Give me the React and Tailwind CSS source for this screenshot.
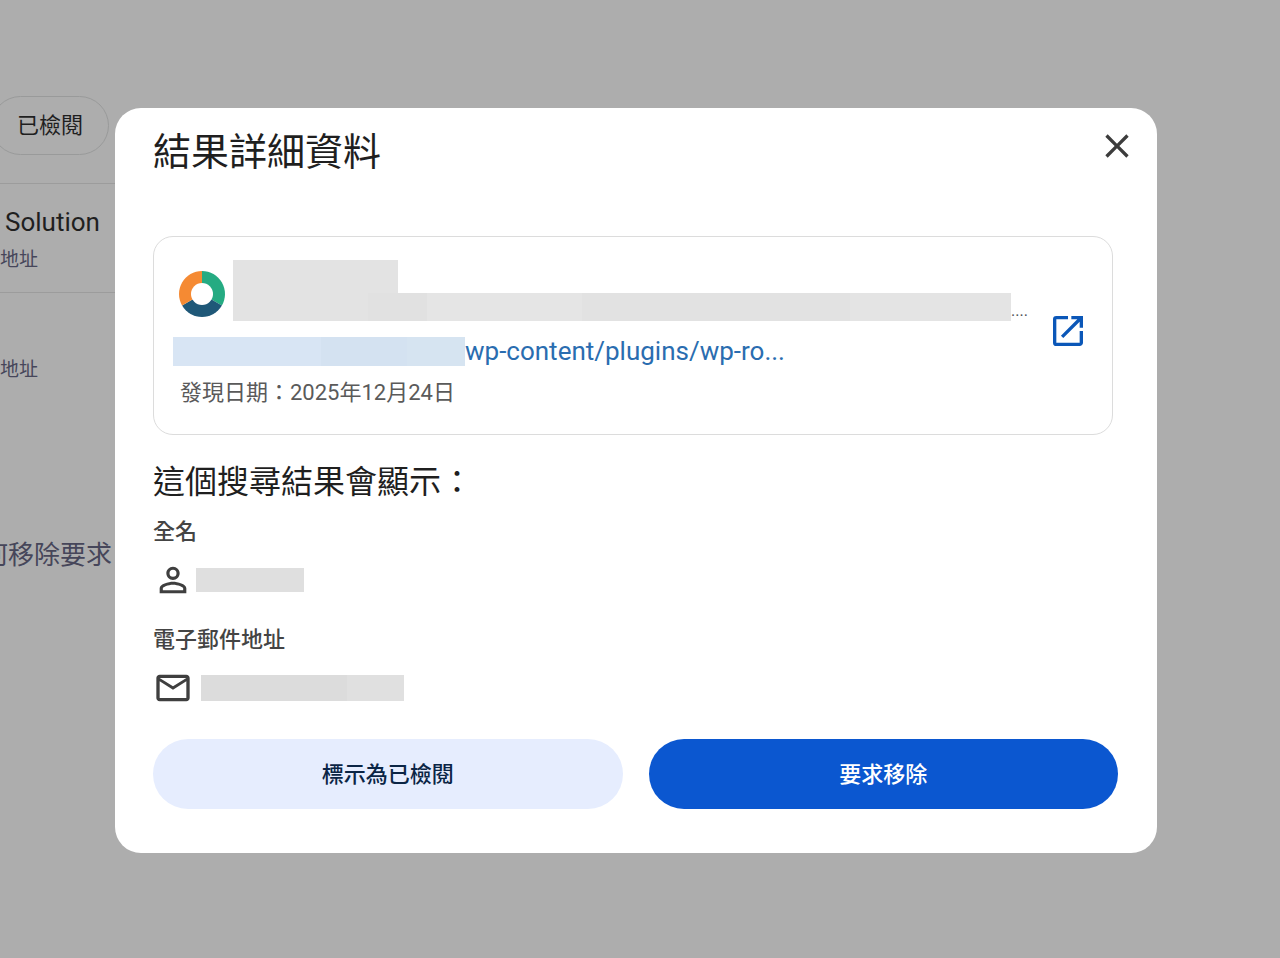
import React from 'react';
import { MdClose, MdMailOutline, MdOpenInNew, MdPersonOutline } from 'react-icons/md';

const SiteIcon = () => (
    <svg viewBox="0 0 46 46" className="mb-1 size-[46px] shrink-0" aria-hidden="true">
        <path d="M23 23 L23 0 A23 23 0 0 1 42.9 34.5 Z" fill="#25ab82" />
        <path d="M23 23 L42.9 34.5 A23 23 0 0 1 3.1 34.5 Z" fill="#1f5878" />
        <path d="M23 23 L3.1 34.5 A23 23 0 0 1 23 0 Z" fill="#f58a33" />
        <circle cx="23" cy="23" r="11" fill="#fff" />
    </svg>
);

const ResultsPage = () => (
    <main className="w-[640px] pt-24 text-[#1f1f1f]">
        <button className="-ml-[9px] h-[59px] rounded-full border border-[#999a9a] px-[25px] text-[22px]">
            已檢閱
        </button>
        <ul className="mt-7">
            <li className="h-[110px] border-y border-[#9c9c9c] pt-5">
                <p className="pl-[5px] text-[26px] leading-9">Solution</p>
                <p className="text-[19px] leading-10 text-[#46465a]">地址</p>
            </li>
            <li className="pt-[57px]">
                <p className="text-[19px] leading-10 text-[#46465a]">地址</p>
            </li>
        </ul>
        <p className="-ml-[18px] mt-[142px] text-[26px] leading-[46px] text-[#46465a]">何移除要求</p>
    </main>
);

const ResultCard = () => (
    <div className="mr-[5px] flex rounded-[20px] border border-[#dcdcdc] pl-[19px] pr-6 pt-[23px] pb-[26px]">
        <div className="min-w-0 flex-1">
            <div className="flex items-end gap-2 pl-1.5">
                <SiteIcon />
                <div className="min-w-0 flex-1">
                    <div className="h-[33px] w-[165px] bg-[#e3e3e3]" />
                    <div className="flex items-end">
                        <div className="flex h-7 w-[778px] shrink">
                            <span className="w-[135px] bg-[#e3e3e3]" />
                            <span className="w-[59px] bg-[#e1e1e1]" />
                            <span className="w-[155px] bg-[#e5e5e5]" />
                            <span className="w-[268px] bg-[#e2e2e2]" />
                            <span className="flex-1 bg-[#e4e4e4]" />
                        </div>
                        <span className="text-base leading-5 text-[#4d5156]">....</span>
                    </div>
                </div>
            </div>
            <div className="mt-4 flex h-[29px] items-center">
                <div className="flex h-full w-[292px]">
                    <span className="w-[148px] bg-[#d8e5f4]" />
                    <span className="w-[86px] bg-[#d4e2f1]" />
                    <span className="flex-1 bg-[#d6e4f1]" />
                </div>
                <a href="#result" className="text-[26px] leading-[29px] text-[#2a6db0]">
                    wp-content/plugins/wp-ro...
                </a>
            </div>
            <p className="mt-3 pl-[7px] text-[22px] leading-[30px] text-[#5a5a5a]">發現日期：2025年12月24日</p>
        </div>
        <a href="#open" aria-label="開啟" className="mt-[51px] self-start text-[#0b57b8]">
            <MdOpenInNew className="size-10" />
        </a>
    </div>
);

const DetailsDialog = () => (
    <div
        role="dialog"
        aria-labelledby="dialog-title"
        className="w-full max-w-[1042px] rounded-[26px] bg-white pt-4 pb-11 text-[#1f1f1f]"
    >
        <header className="flex items-start justify-between pl-[38px] pr-5">
            <h1 id="dialog-title" className="text-[38px] leading-[56px]">結果詳細資料</h1>
            <button aria-label="關閉" className="mt-0.5 text-[#3c3c3c]">
                <MdClose className="size-10" />
            </button>
        </header>

        <div className="mt-14 pl-[38px] pr-[39px]">
            <ResultCard />

            <h2 className="mt-[22px] text-[32px] leading-[50px]">這個搜尋結果會顯示：</h2>

            <h3 className="mt-[9px] text-[22px] font-medium leading-8 text-[#444]">全名</h3>
            <div className="mt-3 flex items-center gap-[3px]">
                <MdPersonOutline className="size-10 text-[#3f3f3f]" />
                <div className="h-6 w-[108px] bg-[#dfdfdf]" />
            </div>

            <h3 className="mt-6 text-[22px] font-medium leading-8 text-[#444]">電子郵件地址</h3>
            <div className="mt-3 flex items-center gap-2">
                <MdMailOutline className="size-10 text-[#3f3f3f]" />
                <div className="flex h-[26px] w-[203px]">
                    <span className="w-[146px] bg-[#dcdcdc]" />
                    <span className="flex-1 bg-[#e0e0e0]" />
                </div>
            </div>

            <div className="mt-[31px] grid grid-cols-2 gap-[26px] text-[22px] font-medium">
                <button className="h-[70px] rounded-full bg-[#e6edfe] text-[#0b2545]">標示為已檢閱</button>
                <button className="h-[70px] rounded-full bg-[#0b57d0] text-white">要求移除</button>
            </div>
        </div>
    </div>
);

const App = () => {
    return (
        <div className="relative min-h-screen overflow-hidden bg-[#adadad] font-[Roboto,'Noto_Sans_CJK_TC',sans-serif]">
            <ResultsPage />
            <div className="absolute inset-0 flex items-start justify-center pt-[108px] pr-2">
                <DetailsDialog />
            </div>
        </div>
    );
};

export default App;
